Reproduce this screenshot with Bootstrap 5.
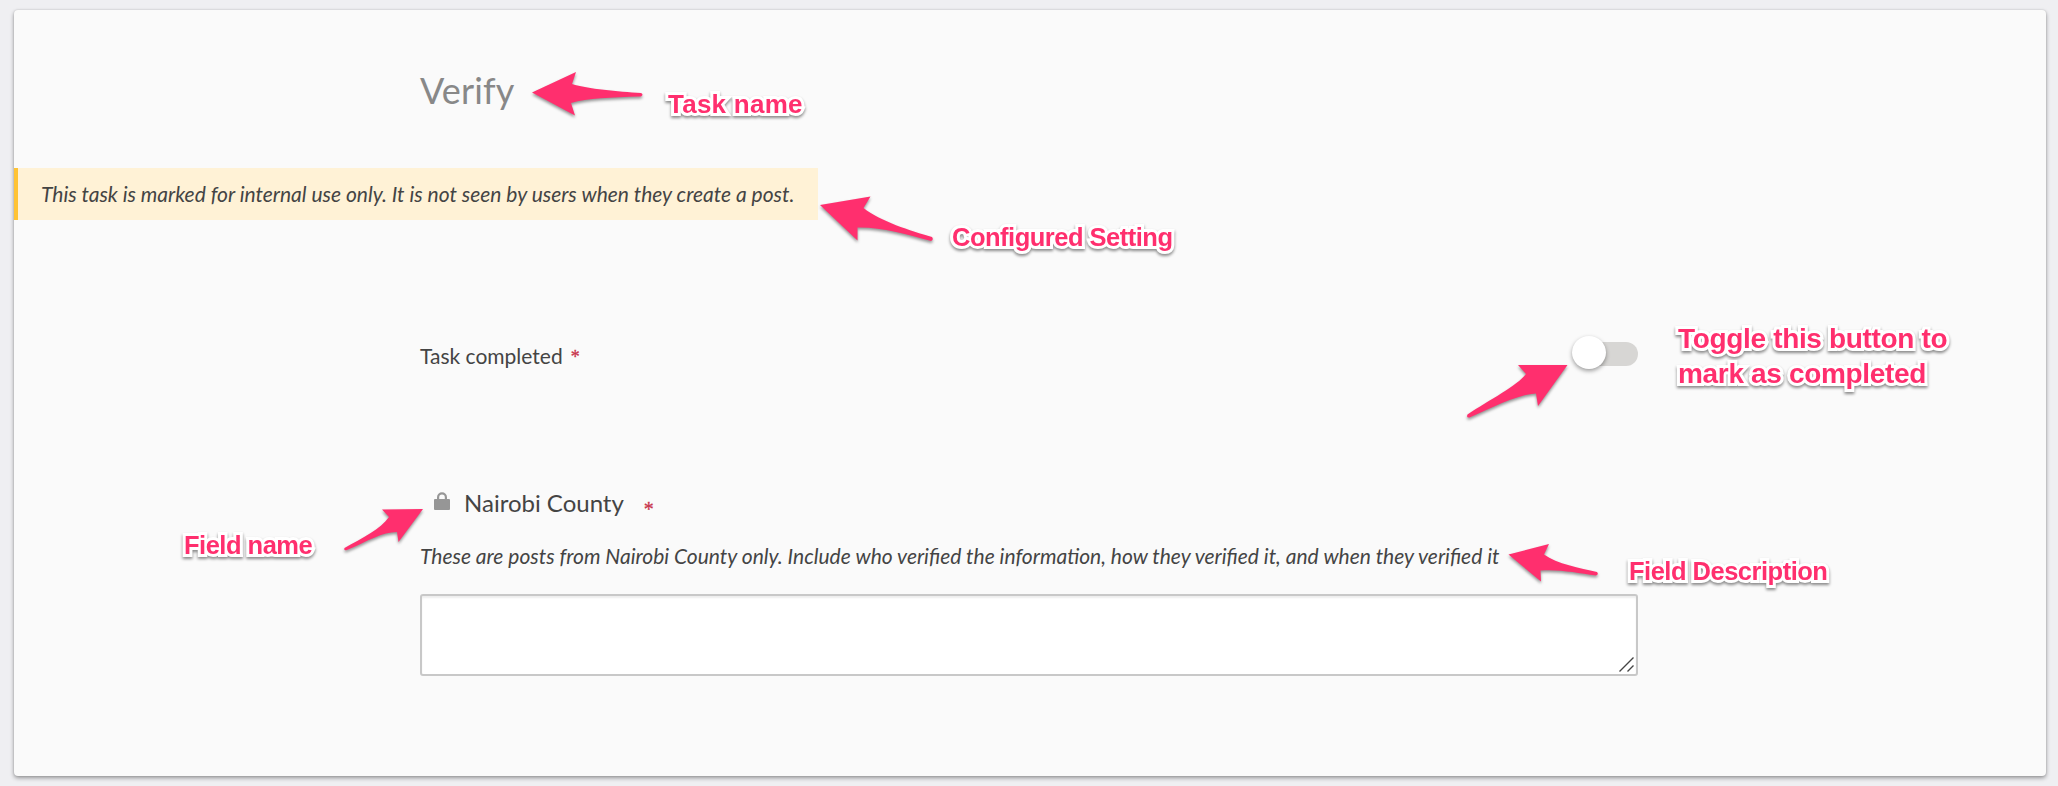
<!DOCTYPE html>
<html lang="en">
<head>
<meta charset="utf-8">
<meta name="viewport" content="width=device-width, initial-scale=1">
<title>Verify</title>
<link href="https://cdn.jsdelivr.net/npm/bootstrap@5.3.0/dist/css/bootstrap.min.css" rel="stylesheet">
<style>
  body { background: #efeff2; font-family: Lato, sans-serif; color: #444; font-size: 21px; line-height: 26px; height: 786px; overflow: hidden; padding: 10px 12px 10px 14px; }
  .task-card { height: 766px; border: 0; border-radius: 4px; background: #fafafa; box-shadow: 0 2px 4px rgba(0,0,0,.38), 0 0 2px rgba(0,0,0,.14); padding-top: 56px; }
  .task-body { width: 1218px; margin-left: 406px; }
  .task-title { font-size: 36px; line-height: 48px; font-weight: 400; color: #888; margin: 0; letter-spacing: .15px; }
  .notice { margin-top: 54px; height: 52px; width: 804px; border-left: 4px solid #ffc334; background: #fff2d6; font-style: italic; padding-left: 23px; }
  .task-row { margin-top: 116px; height: 44px; }
  .task-label { margin-top: 7px; }
  .required { color: #c8324b; font-family: "Liberation Serif", serif; font-size: 18px; line-height: 20px; -webkit-text-stroke: .3px #c8324b; }
  .task-row .required { margin: 4px 0 0 8px; }
  .field-row .required { font-size: 20px; margin: 10px 0 0 20px; }
  .toggle { width: 66px; height: 34px; padding-top: 6px; }
  .toggle-track { height: 24px; margin-left: 12px; border-radius: 12px; background: #d7d6d4; }
  .toggle-knob { width: 34px; height: 33px; left: 0; top: 0; background: #fff; box-shadow: 0 2px 4px rgba(0,0,0,.38); }
  .field-row { margin-top: 109px; padding-left: 14px; height: 34px; }
  .lock { margin-top: 3px; }
  .field-name { font-size: 24px; line-height: 34px; margin: -3px 0 0 14px; }
  .field-desc { font-style: italic; margin: 20px 0 0; height: 26px; white-space: nowrap; }
  .field-input { margin-top: 25px; height: 82px; border: 2px solid #c8c8c8; border-radius: 3px; background: #fff; box-shadow: inset 0 2px 2px rgba(0,0,0,.07); padding: 2px; }
  .notes { inset: 0; pointer-events: none; }
  .arrows { left: 0; top: 0; filter: drop-shadow(0 2px 1.5px rgba(0,0,0,.42)); }
  .note { font: 700 25.5px/30px "Liberation Sans", sans-serif; letter-spacing: -.5px; color: #ff2f6e; white-space: nowrap; filter: drop-shadow(0 2px 1.5px rgba(0,0,0,.45)); -webkit-text-stroke: 6px #fff; stroke-linejoin: round; paint-order: stroke fill; }
  .note-task { left: 668px; top: 89px; font-size: 26px; letter-spacing: .25px; }
  .note-setting { left: 952px; top: 222px; }
  .note-toggle { left: 1678px; top: 321px; font-size: 28px; line-height: 35px; letter-spacing: -.33px; }
  .note-field { left: 184px; top: 530px; }
  .note-desc { left: 1629px; top: 556px; letter-spacing: -.5px; }
</style>
</head>
<body class="position-relative">
<main class="card task-card">
  <div class="task-body"><h1 class="task-title">Verify</h1></div>
  <div class="notice d-flex align-items-center text-nowrap">This task is marked for internal use only. It is not seen by users when they create a post.</div>
  <section class="task-body">
    <div class="task-row d-flex justify-content-between">
      <div class="task-label d-flex"><span>Task completed</span><span class="required">*</span></div>
      <div class="toggle position-relative" role="switch" aria-checked="false">
        <div class="toggle-track"></div>
        <div class="toggle-knob rounded-circle position-absolute"></div>
      </div>
    </div>
    <div class="field-row d-flex">
      <svg class="lock" width="16" height="18" viewBox="0 0 16 18"><path d="M4.100 8V5.200a3.900 3.900 0 0 1 7.800 0V8" fill="none" stroke="#969696" stroke-width="2.200"/><rect y="7" width="16" height="11" rx="1" fill="#969696"/></svg>
      <span class="field-name">Nairobi County</span><span class="required">*</span>
    </div>
    <p class="field-desc">These are posts from Nairobi County only. Include who verified the information, how they verified it, and when they verified it</p>
    <div class="field-input d-flex justify-content-end align-items-end">
      <svg width="15" height="15" viewBox="0 0 15 15" stroke="#444" stroke-width="1.4"><path d="M0.5 14.5L14.5 .5M8.5 14.5L14.5 8.5"/></svg>
    </div>
  </section>
</main>
<div class="notes position-absolute">
  <svg class="arrows position-absolute" width="2058" height="786" fill="#ff2f6e">
    <path d="M532 92.5L576 72L572 84C588 89 618 91.500 641 93Q644 94.500 641 96.500C610 97.500 588 98 571 103L575 115.500Z"/>
    <path d="M820 205L870.500 196.500L863.500 208C880 221 911 231 932 237Q934 239.500 931 241C905 234 882 227 857.500 227.500L857.500 240.500Z"/>
    <path d="M1567.500 365L1518 365L1526 374C1517 386 1489 400 1467.500 414.500Q1466 418 1469.500 417.500C1494 407 1515 395 1536 393.500L1538 406Z"/>
    <path d="M423 509L382 509.500L389 517C381 529 362 538 344.500 548Q343.500 551 347 550C368 541 382 532 397 532L398.500 542Z"/>
    <path d="M1508.500 554.500L1549 544L1544 554.500C1557 564 1580 568 1597 572Q1599 574.500 1596 575.500C1577 573 1560 569 1540.500 570.500L1541 581.500Z"/>
  </svg>
  <div class="note note-task position-absolute">Task name</div>
  <div class="note note-setting position-absolute">Configured Setting</div>
  <div class="note note-toggle position-absolute">Toggle this button to<br>mark as completed</div>
  <div class="note note-field position-absolute">Field name</div>
  <div class="note note-desc position-absolute">Field Description</div>
</div>
<script src="https://cdn.jsdelivr.net/npm/bootstrap@5.3.0/dist/js/bootstrap.bundle.min.js"></script>
</body>
</html>
